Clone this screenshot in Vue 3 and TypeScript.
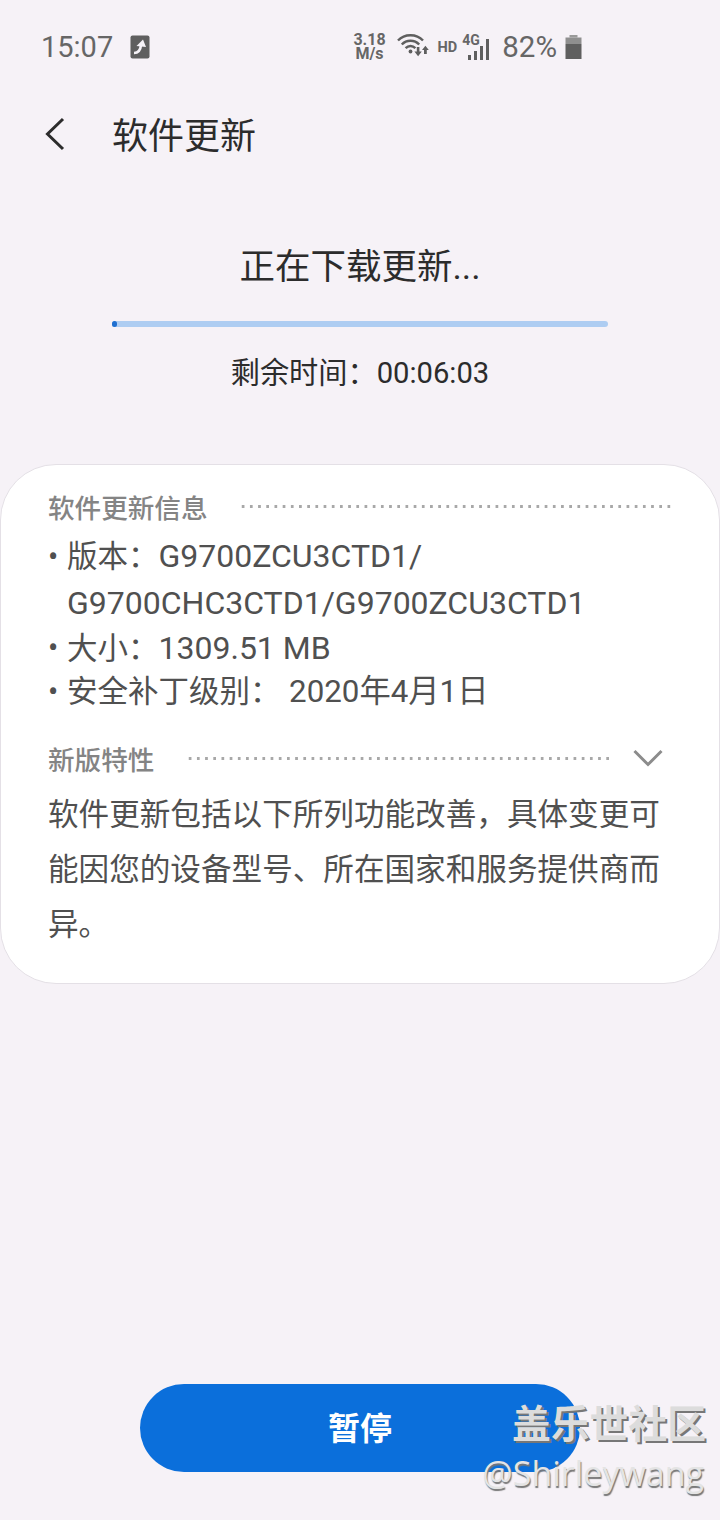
<template>
  <div class="screen">
    <div class="status-bar">
      <span class="clock">15:07</span>
      <svg class="notif" width="20" height="24" viewBox="0 0 20 24">
        <rect x="0.5" y="0.5" width="19" height="23" rx="2" fill="#5f5f5f" />
        <path d="M4 18 C8 18 10.5 15 11 10" fill="none" stroke="#f5f2f7" stroke-width="2.6" />
        <path d="M6.5 11 L13 4.5 L16 12 Z" fill="#f5f2f7" />
      </svg>
      <div class="status-right">
        <span class="speed">3.18<br />M/s</span>
        <svg class="wifi" width="32" height="26" viewBox="0 0 32 26">
          <g fill="none" stroke="#5f5f5f" stroke-width="2.4">
            <path d="M1 7.5 C7.5 0.5 19.5 0.5 26 7.5" />
            <path d="M4.8 11.5 C9.5 6.5 17.5 6.5 22.2 11.5" />
            <path d="M8.6 15.2 C11.5 12.2 15.5 12.2 18.4 15.2" />
          </g>
          <circle cx="13.5" cy="18.5" r="1.9" fill="#5f5f5f" />
          <path d="M19.8 14 h2.6 v4.5 h2.4 l-3.7 4.8 l-3.7 -4.8 h2.4 z" fill="#5f5f5f" />
          <path d="M27 21 v-4 h-2 l3.4 -4.2 l3.4 4.2 h-2 v4 z" fill="#5f5f5f" />
        </svg>
        <span class="hd">HD</span>
        <div class="net">
          <span class="net-label">4G</span>
          <svg width="22" height="21" viewBox="0 0 22 21">
            <rect x="0" y="16" width="3" height="5" fill="#5f5f5f" />
            <rect x="6" y="12" width="3" height="9" fill="#5f5f5f" />
            <rect x="12" y="7" width="3" height="14" fill="#5f5f5f" />
            <rect x="18" y="0" width="3" height="21" fill="#5f5f5f" />
          </svg>
        </div>
        <span class="battery-text">82%</span>
        <svg width="17" height="24" viewBox="0 0 17 24">
          <path d="M4.5 0 h8 v2.5 h-8 z" fill="#9a9a9a" />
          <rect x="0.5" y="2.5" width="16" height="6.5" fill="#8f8f8f" />
          <rect x="0.5" y="9" width="16" height="15" fill="#5f5f5f" />
        </svg>
      </div>
    </div>

    <div class="app-bar">
      <svg class="back" width="22" height="34" viewBox="0 0 22 34">
        <path d="M19 2 L3.5 17 L19 32" fill="none" stroke="#2c2c2c" stroke-width="3" />
      </svg>
      <span class="title">软件更新</span>
    </div>

    <section class="progress">
      <h1 class="progress-title">正在下载更新...</h1>
      <div class="bar">
        <div class="bar-fill" :style="{ width: progress + 'px' }"></div>
      </div>
      <p class="remaining">剩余时间：00:06:03</p>
    </section>

    <section class="card">
      <div class="section-head">
        <span class="section-title">软件更新信息</span>
        <span class="dots dots-first"></span>
      </div>
      <ul class="info">
        <li class="row-version">
          <span class="bullet">•</span>
          <span>版本：<span class="latin">G9700ZCU3CTD1/<br />G9700CHC3CTD1/G9700ZCU3CTD1</span></span>
        </li>
        <li class="row-size">
          <span class="bullet">•</span>
          <span>大小：<span class="latin">1309.51 MB</span></span>
        </li>
        <li class="row-patch">
          <span class="bullet">•</span>
          <span>安全补丁级别： <span class="date">2020年4月1日</span></span>
        </li>
      </ul>
      <div class="section-head second">
        <span class="section-title">新版特性</span>
        <span class="dots dots-second"></span>
        <svg class="chevron" width="30" height="18" viewBox="0 0 30 18">
          <path d="M1.5 2 L15 15.5 L28.5 2" fill="none" stroke="#8c8c8c" stroke-width="3" />
        </svg>
      </div>
      <p class="desc">软件更新包括以下所列功能改善，具体变更可能因您的设备型号、所在国家和服务提供商而异。</p>
    </section>

    <div class="spacer"></div>

    <div class="footer">
      <button class="pause" type="button">暂停</button>
    </div>

    <div class="watermark">
      <div class="wm-name">盖乐世社区</div>
      <div class="wm-user">@Shirleywang</div>
    </div>
  </div>
</template>

<script setup lang="ts">
const progress = 5
</script>

<style>
html,
body {
  margin: 0;
  background: #f6f2f7;
}
</style>

<style scoped>
.screen {
  position: relative;
  width: 720px;
  height: 1520px;
  display: flex;
  flex-direction: column;
  overflow: hidden;
  background: #f6f2f7;
  font-family: Roboto, "Noto Sans CJK SC", sans-serif;
  color: #2c2c2c;
}

.status-bar {
  height: 94px;
  box-sizing: border-box;
  padding: 0 138px 0 41px;
  display: flex;
  align-items: center;
  color: #666;
}

.clock {
  font-size: 29px;
}

.notif {
  margin-left: 17px;
}

.status-right {
  margin-left: auto;
  display: flex;
  align-items: center;
}

.speed {
  font-size: 16px;
  font-weight: 700;
  line-height: 14px;
  text-align: center;
}

.wifi {
  margin-left: 11px;
  margin-top: -2px;
}

.hd {
  margin-left: 9px;
  font-size: 14.5px;
  font-weight: 700;
}

.net {
  position: relative;
  width: 28px;
  height: 25px;
  margin-left: 5px;
  display: flex;
  justify-content: flex-end;
  align-items: flex-end;
}

.net-label {
  position: absolute;
  left: 0;
  top: -2px;
  font-size: 14px;
  font-weight: 700;
  line-height: 14px;
}

.battery-text {
  margin-left: 12px;
  margin-right: 8px;
  font-size: 29.5px;
}

.app-bar {
  height: 82px;
  display: flex;
  align-items: center;
  padding-left: 44px;
}

.back {
  margin-bottom: 2px;
}

.title {
  margin-left: 46px;
  margin-bottom: 4px;
  font-size: 36px;
}

.progress {
  padding-top: 64px;
  display: flex;
  flex-direction: column;
  align-items: center;
}

.progress-title {
  margin: 0;
  font-size: 35.5px;
  font-weight: 400;
  line-height: 54px;
}

.bar {
  width: 496px;
  height: 6px;
  margin-top: 27px;
  border-radius: 3px;
  background: #aecdf2;
}

.bar-fill {
  height: 100%;
  border-radius: 3px;
  background: #1f6fd0;
}

.remaining {
  margin: 25px 0 0;
  font-size: 29.2px;
  line-height: 42px;
}

.card {
  margin-top: 70px;
  height: 520px;
  box-sizing: border-box;
  padding: 21px 44px 0 47px;
  background: #fff;
  border: 1px solid #e4e0e6;
  border-radius: 56px;
}

.section-head {
  display: flex;
  align-items: center;
  height: 40px;
}

.section-title {
  flex: none;
  white-space: nowrap;
  font-size: 26.6px;
  font-weight: 500;
  color: #848484;
}

.dots {
  flex: none;
  height: 3px;
  background-image: radial-gradient(circle, #a8a8a8 1.4px, transparent 1.6px);
  background-size: 8.2px 3px;
  background-repeat: repeat-x;
}

.dots-first {
  width: 433px;
  margin-left: 31px;
}

.dots-second {
  width: 423px;
  margin-left: 32px;
}

.chevron {
  flex: none;
  margin-left: 24px;
}

.info {
  list-style: none;
  margin: 7px 0 0;
  padding: 0;
  font-size: 30.5px;
  color: #505050;
}

.info li {
  display: flex;
}

.row-version {
  line-height: 47px;
}

.row-size {
  line-height: 42px;
}

.row-patch {
  line-height: 44px;
}

.bullet {
  width: 19px;
  flex: none;
}

.latin {
  font-size: 32px;
}

.date {
  margin-left: 1px;
  font-size: 31.3px;
}

.second {
  margin-top: 24px;
}

.desc {
  margin: 9px 0 0;
  font-size: 30.6px;
  line-height: 55px;
  color: #505050;
}

.spacer {
  flex: 1;
}

.footer {
  padding: 0 140px 48px;
}

.pause {
  display: block;
  width: 440px;
  height: 88px;
  padding: 0 0 4px;
  border: none;
  border-radius: 44px;
  background: #0b6fdb;
  color: #fff;
  font-family: inherit;
  font-size: 32px;
  font-weight: 700;
}

.watermark {
  position: absolute;
  right: 14px;
  top: 1402px;
  text-align: right;
}

.wm-name {
  font-size: 38.8px;
  font-weight: 700;
  line-height: 46px;
  color: #dcdcdc;
  text-shadow: 2px 2px 0 #777;
}

.wm-user {
  margin-right: 2px;
  font-family: "Open Sans", sans-serif;
  font-size: 34px;
  line-height: 50px;
  color: #e4e4e4;
  text-shadow: 1px 2px 1px #777;
}
</style>
